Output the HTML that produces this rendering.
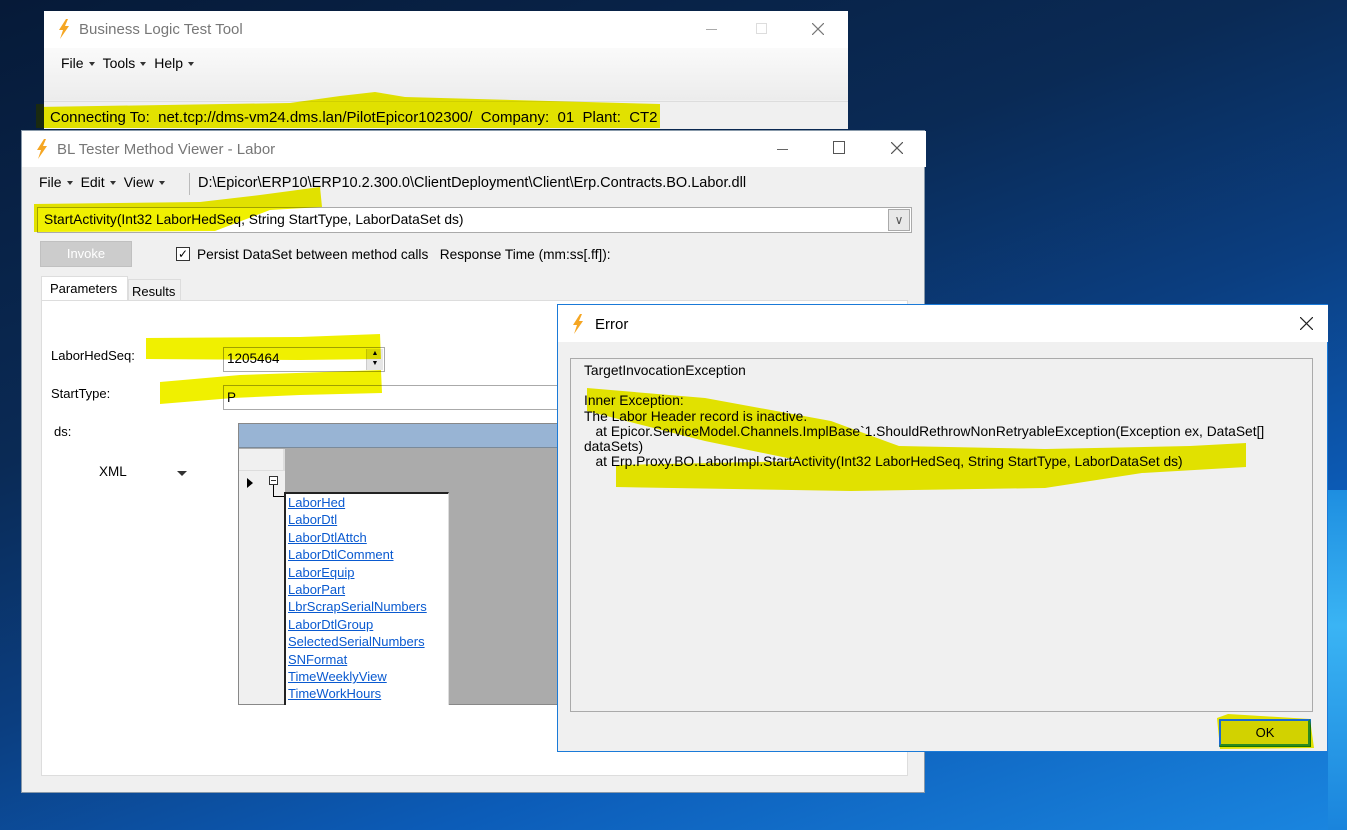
<!DOCTYPE html>
<html><head><meta charset="utf-8"><style>
*{margin:0;padding:0;box-sizing:border-box}
body{width:1347px;height:830px;overflow:hidden;position:relative;font-family:"Liberation Sans",sans-serif;font-size:13px;color:#000;
background:linear-gradient(160deg,#061a38 0%,#0a2a55 35%,#0b3e80 55%,#0c5cb8 75%,#1a86e0 100%);}
.a{position:absolute}
.w{position:absolute;background:#f0f0f0}
.t{position:absolute;white-space:nowrap}
.menu{font-size:14px}
.arr{display:inline-block;width:0;height:0;border-left:3px solid transparent;border-right:3px solid transparent;border-top:4px solid #333;vertical-align:middle;margin:0 8px 0 5px}
.link{color:#0a5ad0;text-decoration:underline;font-size:13px;line-height:17.4px;display:block}
</style></head><body>
<div class="a" style="left:1328px;top:490px;width:19px;height:340px;background:linear-gradient(180deg,#1e8ee0,#3ab4f4 40%,#1a84dc)"></div>

<!-- Window 1 -->
<div class="w" style="left:44px;top:11px;width:804px;height:118px;background:#f0f0f0">
  <div class="a" style="left:0;top:0;width:804px;height:37px;background:#fff"></div>
  <svg class="a" style="left:12px;top:8px" width="16" height="20" viewBox="0 0 16 20"><path d="M10 0 L3 11 L7 11 L4 20 L13 7 L9 7 L12 0Z" fill="#f5a623"/></svg>
  <div class="t" style="left:35px;top:10px;font-size:15px;color:#777">Business Logic Test Tool</div>
  <div class="a" style="left:662px;top:18px;width:11px;height:1px;background:#aaa"></div>
  <div class="a" style="left:712px;top:12px;width:11px;height:11px;border:1px solid #ddd"></div>
  <svg class="a" style="left:768px;top:12px" width="12" height="12"><path d="M0 0L12 12M12 0L0 12" stroke="#777" stroke-width="1.2"/></svg>
  <div class="a" style="left:0;top:37px;width:804px;height:52px;background:linear-gradient(#fafafa,#ececec)"></div>
  <div class="t menu" style="left:17px;top:44px">File<span class="arr"></span>Tools<span class="arr"></span>Help<span class="arr"></span></div>
  <div class="a" style="left:0;top:90px;width:804px;height:1px;background:#ddd"></div>
  <div class="t" style="left:6px;top:98px;font-size:15px">Connecting To:&nbsp; net.tcp://dms-vm24.dms.lan/PilotEpicor102300/&nbsp; Company:&nbsp; 01&nbsp; Plant:&nbsp; CT2</div>
</div>

<!-- Window 2 -->
<div class="w" style="left:21px;top:130px;width:904px;height:663px;border:1px solid #8899aa">
  <div class="a" style="left:0;top:0;width:904px;height:36px;background:#fff"></div>
  <svg class="a" style="left:12px;top:8px" width="16" height="20" viewBox="0 0 16 20"><path d="M10 0 L3 11 L7 11 L4 20 L13 7 L9 7 L12 0Z" fill="#f5a623"/></svg>
  <div class="t" style="left:35px;top:10px;font-size:15px;color:#777">BL Tester Method Viewer - Labor</div>
  <div class="a" style="left:755px;top:18px;width:11px;height:1px;background:#666"></div>
  <div class="a" style="left:811px;top:10px;width:12px;height:13px;border:1px solid #555"></div>
  <svg class="a" style="left:869px;top:11px" width="12" height="12"><path d="M0 0L12 12M12 0L0 12" stroke="#555" stroke-width="1.2"/></svg>
  <div class="t menu" style="left:17px;top:43px">File<span class="arr"></span>Edit<span class="arr"></span>View<span class="arr"></span></div>
  <div class="a" style="left:167px;top:42px;width:1px;height:22px;background:#bbb"></div>
  <div class="t" style="left:176px;top:44px;font-size:14.5px">D:\Epicor\ERP10\ERP10.2.300.0\ClientDeployment\Client\Erp.Contracts.BO.Labor.dll</div>
  <div class="a" style="left:15px;top:76px;width:875px;height:26px;background:#fff;border:1px solid #aaa"></div>
  <div class="t" style="left:22px;top:81px;font-size:13.8px">StartActivity(Int32 LaborHedSeq, String StartType, LaborDataSet ds)</div>
  <div class="a" style="left:866px;top:78px;width:22px;height:22px;background:#e8e8e8;border:1px solid #aaa;text-align:center;color:#555;font-size:12px;line-height:20px">∨</div>
  <div class="a" style="left:18px;top:110px;width:92px;height:26px;background:#ccc;border:1px solid #c0c0c0;color:#fff;text-align:center;line-height:24px;font-size:13px">Invoke</div>
  <div class="a" style="left:154px;top:116px;width:14px;height:14px;border:1px solid #333;background:#fff;font-size:12px;line-height:12px;text-align:center">✓</div>
  <div class="t" style="left:175px;top:116px;font-size:13.7px">Persist DataSet between method calls&nbsp;&nbsp; Response Time (mm:ss[.ff]):</div>
  <div class="a" style="left:19px;top:145px;width:87px;height:25px;background:#fff;border:1px solid #ddd;border-bottom:none"></div>
  <div class="t" style="left:28px;top:150px">Parameters</div>
  <div class="a" style="left:106px;top:148px;width:53px;height:22px;border:1px solid #ddd;border-bottom:none"></div>
  <div class="t" style="left:110px;top:153px">Results</div>
  <div class="a" style="left:19px;top:169px;width:867px;height:476px;background:#fff;border:1px solid #ddd"></div>
  <div class="t" style="left:29px;top:217px">LaborHedSeq:</div>
  <div class="a" style="left:201px;top:216px;width:162px;height:25px;border:1px solid #aaa;background:#fff"></div>
  <div class="t" style="left:205px;top:220px;font-size:13.5px">1205464</div>
  <div class="a" style="left:344px;top:218px;width:17px;height:21px;background:#e6e6e6;border-left:1px solid #ccc;font-size:7px;text-align:center;line-height:10px">▲<br>▼</div>
  <div class="t" style="left:29px;top:255px">StartType:</div>
  <div class="a" style="left:201px;top:254px;width:685px;height:25px;border:1px solid #aaa;background:#fff"></div>
  <div class="t" style="left:205px;top:259px;font-size:13.5px">P</div>
  <div class="t" style="left:32px;top:293px">ds:</div>
  <div class="t" style="left:77px;top:333px;font-size:13.5px">XML</div>
  <div class="a" style="left:155px;top:340px;border-left:5px solid transparent;border-right:5px solid transparent;border-top:5px solid #333"></div>
  <div class="a" style="left:216px;top:292px;width:670px;height:282px;background:#ababab;border:1px solid #888;border-right:none"></div>
  <div class="a" style="left:217px;top:293px;width:669px;height:24px;background:#98b4d4;border-bottom:1px solid #7a8a9a"></div>
  <div class="a" style="left:217px;top:318px;width:46px;height:255px;background:#f0f0f0"></div>
  <div class="a" style="left:217px;top:318px;width:46px;height:22px;border-right:2px solid #ddd;border-bottom:1px solid #ddd"></div>
  <div class="a" style="left:225px;top:347px;border-top:5px solid transparent;border-bottom:5px solid transparent;border-left:6px solid #000"></div>
  <div class="a" style="left:247px;top:345px;width:9px;height:9px;border:1px solid #333;background:#fff"><div class="a" style="left:1px;top:3px;width:5px;height:1px;background:#333"></div></div>
  <div class="a" style="left:251px;top:354px;width:1px;height:12px;background:#000"></div>
  <div class="a" style="left:251px;top:365px;width:12px;height:1px;background:#000"></div>
  <div class="a" style="left:262px;top:361px;width:165px;height:213px;background:#fff;border-top:2px solid #222;border-left:2px solid #222;border-right:1px solid #ddd"></div>
  <div class="a" style="left:266px;top:363px">
    <span class="link">LaborHed</span><span class="link">LaborDtl</span><span class="link">LaborDtlAttch</span><span class="link">LaborDtlComment</span><span class="link">LaborEquip</span><span class="link">LaborPart</span><span class="link">LbrScrapSerialNumbers</span><span class="link">LaborDtlGroup</span><span class="link">SelectedSerialNumbers</span><span class="link">SNFormat</span><span class="link">TimeWeeklyView</span><span class="link">TimeWorkHours</span>
  </div>
</div>

<!-- Error dialog -->
<div class="w" style="left:557px;top:304px;width:771px;height:448px;border:1px solid #1a7ad8">
  <div class="a" style="left:0;top:0;width:770px;height:37px;background:#fff"></div>
  <svg class="a" style="left:12px;top:9px" width="16" height="20" viewBox="0 0 16 20"><path d="M10 0 L3 11 L7 11 L4 20 L13 7 L9 7 L12 0Z" fill="#f5a623"/></svg>
  <div class="t" style="left:37px;top:11px;font-size:15px">Error</div>
  <svg class="a" style="left:742px;top:12px" width="13" height="13"><path d="M0 0L13 13M13 0L0 13" stroke="#222" stroke-width="1.2"/></svg>
  <div class="a" style="left:12px;top:53px;width:743px;height:354px;border:1px solid #aaa;background:#f0f0f0"></div>
  <div class="t" style="left:26px;top:58px;line-height:15.2px;font-size:13.8px">TargetInvocationException<br><br>Inner Exception:<br>The Labor Header record is inactive.<br>&nbsp;&nbsp; at Epicor.ServiceModel.Channels.ImplBase`1.ShouldRethrowNonRetryableException(Exception ex, DataSet[]<br>dataSets)<br>&nbsp;&nbsp; at Erp.Proxy.BO.LaborImpl.StartActivity(Int32 LaborHedSeq, String StartType, LaborDataSet ds)</div>
  <div class="a" style="left:661px;top:414px;width:92px;height:28px;border:2px solid #1a7ad8;background:#e0e0e0;text-align:center;line-height:24px">OK</div>
</div>

<svg class="a" style="left:0;top:0;mix-blend-mode:multiply" width="1347" height="830">
  <g fill="#f0f000">
    <polygon points="36,107 290,103 340,96 375,92 405,97 660,104 660,128 36,128"/>
    <polygon points="34,204 200,202 260,195 320,187 322,207 270,210 215,231 34,232"/>
    <polygon points="146,338 300,337 380,334 381,359 300,360 146,359"/>
    <polygon points="160,382 240,375 381,370 382,393 300,395 233,398 160,404"/>
    <polygon points="587,388 705,398 831,421 899,446 1045,449 1190,446 1246,443 1246,467 1142,473 1045,488 851,491 616,487 616,465 802,461 705,441 587,411"/>
    <polygon points="1217,718 1228,714 1310,719 1314,748 1220,749"/>
  </g>
</svg>
<div class="a" style="left:36px;top:104px;width:8px;height:24px;background:#1a2a10"></div>
<div class="a" style="left:1219px;top:719px;width:91px;height:27px;border:2px solid #2a8a20;border-top-color:#1a6ad0;border-left-color:#1a6ad0"></div>
</body></html>
